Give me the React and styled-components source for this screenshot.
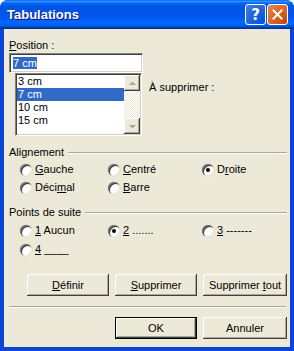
import React from 'react';
import styled, { createGlobalStyle, css } from 'styled-components';

const GlobalStyle = createGlobalStyle`
  html, body { margin: 0; padding: 0; background: #fff; }
  body {
    font-family: "Liberation Sans", Arial, sans-serif;
    font-size: 11px;
    color: #000;
  }
`;

const sunken = css`
  box-sizing: border-box;
  border: 1px solid;
  border-color: #808080 #fff #fff #808080;
  box-shadow: inset 1px 1px 0 #404040, inset -1px -1px 0 #d4d0c8;
  background: #fff;
`;

const raised = css`
  box-sizing: border-box;
  background: #ece9d8;
  box-shadow: inset -1px -1px 0 #404040, inset 1px 1px 0 #fff,
    inset -2px -2px 0 #aca899, inset 2px 2px 0 #ece9d8;
`;

const Window = styled.div`
  width: 294px;
  height: 351px;
  display: flex;
  flex-direction: column;
  background: #0b45d8;
  border-radius: 8px 8px 0 0;
  overflow: hidden;
`;

const TitleBar = styled.div`
  height: 29px;
  flex: none;
  display: flex;
  align-items: center;
  padding: 0 6px 0 7px;
  background: linear-gradient(180deg, #0058ee 0%, #3a93ff 4%, #288eff 6%, #127dff 8%,
    #036ffc 10%, #0262ee 14%, #0057e5 20%, #0054e3 24%, #0055eb 56%, #005bf5 66%,
    #026afe 76%, #0062ef 86%, #0052d6 92%, #0040ab 94%, #003092 100%);
`;

const Title = styled.div`
  flex: 1;
  color: #fff;
  font-weight: bold;
  font-size: 13px;
  text-shadow: 1px 1px 0 #0f1089;
`;

const TitleButton = styled.div`
  width: 21px;
  height: 21px;
  box-sizing: border-box;
  margin-left: 1px;
  border: 1px solid #fff;
  border-radius: 3px;
  display: flex;
  align-items: center;
  justify-content: center;
  color: #fff;
  font-family: "DejaVu Sans", sans-serif;
  font-weight: bold;
  font-size: 15px;
  background: ${p => p.$close
    ? 'radial-gradient(circle at 90% 90%, #cc4600 0%, #dc6527 55%, #e08e64 100%)'
    : 'radial-gradient(circle at 90% 90%, #0054e9 0%, #2263d5 55%, #4482ef 100%)'};
`;

const Client = styled.div`
  flex: 1;
  margin: 0 4px 4px 4px;
  background: #ece9d8;
  display: flex;
  flex-direction: column;
`;

const PositionLabel = styled.div`
  height: 13px;
  line-height: 13px;
  margin: 10px 0 0 5px;
`;

const PositionInput = styled.div`
  ${sunken};
  width: 134px;
  height: 20px;
  margin: 1px 0 0 5px;
  padding: 3px 0 0 3px;
  display: flex;
  align-items: flex-start;
`;

const Selected = styled.span`
  background: #316ac5;
  color: #fff;
  line-height: 12px;
  height: 12px;
`;

const ListRow = styled.div`
  display: flex;
  align-items: flex-start;
  margin-left: 11px;
`;

const ListBox = styled.div`
  ${sunken};
  width: 127px;
  height: 63px;
  padding: 1px;
  display: flex;
`;

const Items = styled.div`
  flex: 1;
  display: flex;
  flex-direction: column;
`;

const Item = styled.div`
  height: 13px;
  line-height: 13px;
  padding-left: 1px;
  background: ${p => (p.$active ? '#316ac5' : 'transparent')};
  color: ${p => (p.$active ? '#fff' : '#000')};
`;

const ScrollBar = styled.div`
  width: 16px;
  display: flex;
  flex-direction: column;
  justify-content: space-between;
  background: repeating-conic-gradient(#ece9d8 0 25%, #fff 0 50%) 0 0 / 2px 2px;
`;

const ScrollButton = styled.div`
  ${raised};
  width: 16px;
  height: 16px;
  display: flex;
  align-items: center;
  justify-content: center;
`;

const SupprLabel = styled.div`
  height: 13px;
  line-height: 13px;
  margin: 8px 0 0 7px;
`;

const GroupHeader = styled.div`
  display: flex;
  align-items: center;
  height: 13px;
  line-height: 13px;
  margin-top: ${p => p.$top}px;
  padding: 0 3px 0 5px;
`;

const Rule = styled.div`
  flex: 1;
  margin-left: 4px;
  border-top: 1px solid #aca899;
  border-bottom: 1px solid #fff;
`;

const RadioGrid = styled.div`
  display: grid;
  grid-template-columns: 88px 94px auto;
  row-gap: ${p => p.$gap}px;
  margin-top: ${p => p.$top}px;
  padding-left: 16px;
`;

const RadioItem = styled.div`
  display: flex;
  align-items: center;
  height: 13px;
  line-height: 13px;
  white-space: nowrap;
`;

const Circle = styled.span`
  width: 12px;
  height: 12px;
  flex: none;
  box-sizing: border-box;
  border-radius: 50%;
  background: #fff;
  margin-right: 3px;
  display: flex;
  align-items: center;
  justify-content: center;
  box-shadow: inset 1px 1px 0 #808080, inset 2px 2px 0 #404040,
    inset -1px -1px 0 #ece9d8, 0 0 0 0.5px #d8d4c4;

  &::after {
    content: '';
    width: 4px;
    height: 4px;
    border-radius: 50%;
    background: #000;
    display: ${p => (p.$checked ? 'block' : 'none')};
  }
`;

const ButtonRow = styled.div`
  display: flex;
  gap: 6px;
  margin-top: ${p => p.$top}px;
  padding-left: ${p => p.$left}px;
`;

const Button = styled.div`
  ${raised};
  width: ${p => p.$w}px;
  height: 22px;
  display: flex;
  align-items: center;
  justify-content: center;
  white-space: pre;
  ${p => p.$default && css`
    border: 1px solid #000;
  `}
`;

const Separator = styled.div`
  margin: 10px 4px 0 5px;
  border-top: 1px solid #aca899;
  border-bottom: 1px solid #fff;
`;

const Arrow = ({ down }) => (
  <svg width="7" height="5" viewBox="0 0 7 5">
    <path d={down ? 'M0 1h7L3.5 4.5z' : 'M0 4h7L3.5 0.5z'} fill="#aca899" />
  </svg>
);

const Radio = ({ checked, children }) => (
  <RadioItem>
    <Circle $checked={checked} />
    <span>{children}</span>
  </RadioItem>
);

export default function App() {
  return (
    <>
      <GlobalStyle />
      <Window>
        <TitleBar>
          <Title>Tabulations</Title>
          <TitleButton>?</TitleButton>
          <TitleButton $close>
            <svg width="11" height="11" viewBox="0 0 11 11">
              <path d="M1.5 1.5l8 8M9.5 1.5l-8 8" stroke="#fff" strokeWidth="2" strokeLinecap="square" />
            </svg>
          </TitleButton>
        </TitleBar>
        <Client>
          <PositionLabel><u>P</u>osition :</PositionLabel>
          <PositionInput><Selected>7 cm</Selected></PositionInput>
          <ListRow>
            <ListBox>
              <Items>
                <Item>3 cm</Item>
                <Item $active>7 cm</Item>
                <Item>10 cm</Item>
                <Item>15 cm</Item>
              </Items>
              <ScrollBar>
                <ScrollButton><Arrow /></ScrollButton>
                <ScrollButton><Arrow down /></ScrollButton>
              </ScrollBar>
            </ListBox>
            <SupprLabel>À supprimer :</SupprLabel>
          </ListRow>

          <GroupHeader $top={10}>Alignement<Rule /></GroupHeader>
          <RadioGrid $top={4} $gap={5}>
            <Radio><u>G</u>auche</Radio>
            <Radio><u>C</u>entré</Radio>
            <Radio checked>D<u>r</u>oite</Radio>
            <Radio>Déci<u>m</u>al</Radio>
            <Radio><u>B</u>arre</Radio>
          </RadioGrid>

          <GroupHeader $top={12}>Points de suite<Rule /></GroupHeader>
          <RadioGrid $top={5} $gap={6}>
            <Radio><u>1</u> Aucun</Radio>
            <Radio checked><u>2</u> .......</Radio>
            <Radio><u>3</u> -------</Radio>
            <Radio><u>4</u> ____</Radio>
          </RadioGrid>

          <ButtonRow $top={18} $left={23}>
            <Button $w={82}><span><u>D</u>éfinir</span></Button>
            <Button $w={82}><span><u>S</u>upprimer</span></Button>
            <Button $w={84}><span>Supprimer <u>t</u>out</span></Button>
          </ButtonRow>
          <Separator />
          <ButtonRow $top={9} $left={111}>
            <Button $w={82} $default><span>OK</span></Button>
            <Button $w={84}><span>Annuler</span></Button>
          </ButtonRow>
        </Client>
      </Window>
    </>
  );
}
